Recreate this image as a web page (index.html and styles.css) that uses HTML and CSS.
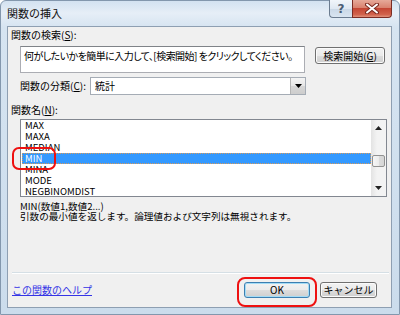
FILE: index.html
```html
<!DOCTYPE html>
<html lang="ja">
<head>
<meta charset="utf-8">
<title>関数の挿入</title>
<link rel="stylesheet" href="styles.css">
</head>
<body>
<div class="window">
  <div class="titlebar">
    <span class="title">関数の挿入</span>
    <div class="caption">
      <span class="cap-btn cap-help">?</span>
      <span class="cap-btn cap-close">
        <svg width="14" height="11" viewBox="0 0 14 11"><path d="M2 1.5 L12 9.5 M12 1.5 L2 9.5" stroke="#7a2a20" stroke-width="4" stroke-linecap="round"/><path d="M2 1.5 L12 9.5 M12 1.5 L2 9.5" stroke="#ffffff" stroke-width="2" stroke-linecap="round"/></svg>
      </span>
    </div>
  </div>
  <div class="client">
    <div class="label label-search">関数の検索(<u>S</u>):</div>
    <div class="search-row">
      <div class="textbox">何がしたいかを簡単に入力して、[検索開始] をクリックしてください。</div>
      <div class="btn btn-search">検索開始(<u>G</u>)</div>
    </div>
    <div class="cat-row">
      <span class="label cat-label">関数の分類(<u>C</u>):</span>
      <div class="combo">
        <span class="combo-text">統計</span>
        <span class="combo-btn"><svg width="7" height="4" viewBox="0 0 7 4"><path d="M0 0 H7 L3.5 4 Z" fill="#000"/></svg></span>
      </div>
    </div>
    <div class="label label-name">関数名(<u>N</u>):</div>
    <div class="listbox">
      <ul class="items">
        <li class="item">MAX</li>
        <li class="item">MAXA</li>
        <li class="item">MEDIAN</li>
        <li class="item selected">MIN</li>
        <li class="item">MINA</li>
        <li class="item">MODE</li>
        <li class="item">NEGBINOMDIST</li>
      </ul>
      <div class="scrollbar">
        <span class="arrow"><svg width="7" height="4" viewBox="0 0 7 4"><path d="M0 4 H7 L3.5 0 Z" fill="#222"/></svg></span>
        <span class="track track-top"></span>
        <span class="thumb"></span>
        <span class="track track-bottom"></span>
        <span class="arrow"><svg width="7" height="4" viewBox="0 0 7 4"><path d="M0 0 H7 L3.5 4 Z" fill="#222"/></svg></span>
      </div>
    </div>
    <div class="desc">
      <div class="desc-line">MIN(数値1,数値2...)</div>
      <div class="desc-line">引数の最小値を返します。論理値および文字列は無視されます。</div>
    </div>
    <div class="sep"></div>
    <div class="footer">
      <a class="help-link" href="#">この関数のヘルプ</a>
      <div class="btn btn-ok">OK</div>
      <div class="btn btn-cancel">キャンセル</div>
    </div>
    <div class="mark mark-min"></div>
    <div class="mark mark-ok"></div>
  </div>
</div>
</body>
</html>
```
FILE: styles.css
```css
html, body {
  margin: 0;
  padding: 0;
}
body {
  width: 400px;
  height: 315px;
  overflow: hidden;
  font-family: "Noto Sans CJK JP", "Liberation Sans", sans-serif;
  color: #000;
}
.window {
  box-sizing: border-box;
  width: 400px;
  height: 315px;
  background: linear-gradient(180deg, #d3e2f1 0px, #e6eef7 12px, #d6e4f1 26px, #cbdcec 100%);
  border: 1px solid #8397ad;
  border-radius: 6px 6px 0 0;
  display: flex;
  flex-direction: column;
  padding: 0 7px 6px 6px;
}
.titlebar {
  height: 25px;
  display: flex;
  justify-content: space-between;
  align-items: flex-start;
  flex-shrink: 0;
}
.title {
  font-size: 11px;
  line-height: 12px;
  margin-top: 6px;
  color: #111;
}
.caption {
  display: flex;
  margin-top: -1px;
}
.cap-btn {
  box-sizing: border-box;
  height: 18px;
  display: flex;
  align-items: center;
  justify-content: center;
  border: 1px solid #6b7c90;
  border-top: none;
}
.cap-help {
  width: 23px;
  border-radius: 0 0 0 4px;
  border-right: none;
  background: linear-gradient(180deg, #f1f5fa 0%, #dfe8f2 50%, #c9d7e6 51%, #d9e5f1 100%);
  color: #4a5d74;
  font-size: 12px;
  font-family: "DejaVu Sans", sans-serif;
  font-weight: bold;
}
.cap-close {
  width: 40px;
  border-radius: 0 0 4px 0;
  background: linear-gradient(180deg, #e6a999 0%, #d9826f 45%, #c44634 50%, #d1624c 85%, #e0927c 100%);
  border-color: #7b2c24;
}
.client {
  position: relative;
  box-sizing: border-box;
  width: 385px;
  height: 282px;
  background: #f0f0f0;
  border: 1px solid #8e9fb2;
  display: flex;
  flex-direction: column;
  font-size: 10px;
}
.label {
  font-size: 10px;
  line-height: 12px;
  white-space: nowrap;
}
.label-search {
  margin: 2px 0 0 3px;
}
.search-row {
  display: flex;
  align-items: flex-start;
  gap: 10px;
  margin: 5px 0 0 12px;
}
.textbox {
  box-sizing: border-box;
  width: 285px;
  height: 27px;
  background: #fff;
  border: 1px solid #abadb3;
  border-top-color: #7f8388;
  padding: 3px 0 0 3px;
  font-size: 10px;
  line-height: 12px;
  letter-spacing: -0.55px;
  white-space: nowrap;
  overflow: hidden;
  font-feature-settings: "palt";
}
.btn {
  box-sizing: border-box;
  display: flex;
  align-items: center;
  justify-content: center;
  border: 1px solid #707070;
  border-radius: 3px;
  background: linear-gradient(180deg, #f2f2f2 0%, #ebebeb 50%, #dddddd 51%, #cfcfcf 100%);
  box-shadow: inset 0 0 0 1px #fbfbfb;
  font-size: 10px;
  line-height: 12px;
  white-space: nowrap;
}
.btn-search {
  width: 70px;
  height: 17px;
  margin-top: 1px;
}
.cat-row {
  display: flex;
  align-items: center;
  margin: 4px 0 0 12px;
  height: 18px;
}
.cat-label {
  width: 70px;
  flex-shrink: 0;
}
.combo {
  box-sizing: border-box;
  width: 216px;
  height: 18px;
  background: #fff;
  border: 1px solid #a5acb5;
  display: flex;
  align-items: center;
  justify-content: space-between;
}
.combo-text {
  padding-left: 4px;
  line-height: 12px;
}
.combo-btn {
  box-sizing: border-box;
  width: 15px;
  height: 16px;
  display: flex;
  align-items: center;
  justify-content: center;
  border-left: 1px solid #b5b5b5;
  background: linear-gradient(180deg, #f4f4f4 0%, #e6e6e6 50%, #d6d6d6 51%, #cdcdcd 100%);
}
.label-name {
  margin: 9px 0 0 3px;
}
.listbox {
  box-sizing: border-box;
  width: 367px;
  height: 78px;
  margin: 3px 0 0 12px;
  background: #fff;
  border: 1px solid #828790;
  display: flex;
}
.items {
  list-style: none;
  margin: 0;
  padding: 0;
  flex: 1;
}
.item {
  height: 11px;
  line-height: 11px;
  padding-left: 3px;
  margin-left: 1px;
  font-size: 9.5px;
  white-space: nowrap;
}
.item.selected {
  background: #3399ff;
  color: #fff;
  outline: 1px dotted #d89a5a;
  outline-offset: -1px;
}
.scrollbar {
  width: 15px;
  display: flex;
  flex-direction: column;
  background: linear-gradient(90deg, #e3e3e3 0%, #f3f3f3 40%, #f3f3f3 100%);
}
.arrow {
  height: 16px;
  display: flex;
  align-items: center;
  justify-content: center;
  flex-shrink: 0;
}
.track-top {
  height: 19px;
}
.track-bottom {
  flex: 1;
}
.thumb {
  box-sizing: border-box;
  height: 12px;
  margin: 0 1px;
  border: 1px solid #929292;
  border-radius: 2px;
  background: linear-gradient(90deg, #f6f6f6 0%, #ececec 50%, #dcdcdc 51%, #d6d6d6 100%);
}
.desc {
  margin: 4px 0 0 12px;
}
.desc-line {
  line-height: 10px;
  height: 10px;
  font-size: 9.6px;
  white-space: nowrap;
}
.sep {
  height: 1px;
  margin: 51px 2px 0 4px;
  background: #d5dfe5;
  border-bottom: 1px solid #ffffff;
}
.footer {
  display: flex;
  align-items: center;
  margin: 8px 14px 0 4px;
  height: 16px;
}
.help-link {
  color: #3434e6;
  text-decoration: underline;
  font-size: 10px;
  line-height: 12px;
  margin-right: auto;
}
.btn-ok {
  width: 66px;
  height: 16px;
  border-color: #3c7fb1;
  box-shadow: inset 0 0 0 1px #a3dcf6;
  margin-right: 10px;
}
.btn-cancel {
  width: 57px;
  height: 16px;
}
.mark {
  position: absolute;
  box-sizing: border-box;
  border: 2px solid #ee1111;
}
.mark-min {
  left: 4px;
  top: 120px;
  width: 44px;
  height: 23px;
  border-radius: 7px;
}
.mark-ok {
  left: 229px;
  top: 250px;
  width: 80px;
  height: 30px;
  border-radius: 8px;
}
```
